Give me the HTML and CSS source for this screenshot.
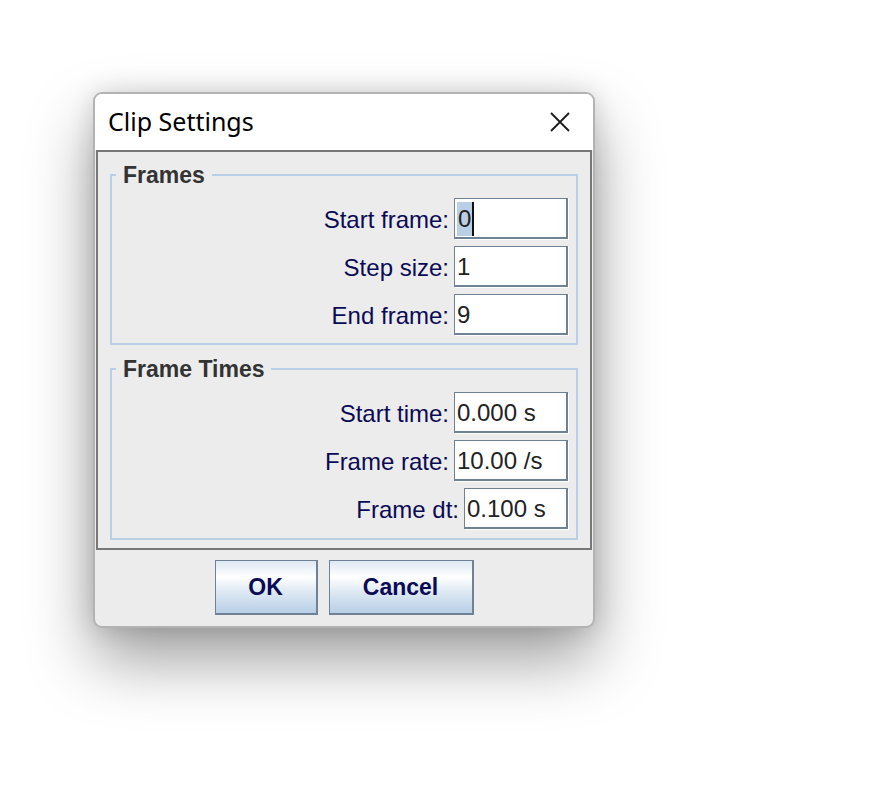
FILE: index.html
```html
<!DOCTYPE html>
<html>
<head>
<meta charset="utf-8">
<link rel="stylesheet" href="styles.css">
</head>
<body>
<div class="page">
  <div class="window">
    <div class="titlebar">
      <span class="title">Clip Settings</span>
      <svg class="close" width="20" height="20" viewBox="0 0 20 20"><path d="M1 1 L19 19 M19 1 L1 19" stroke="#1a1a1a" stroke-width="1.8" fill="none"/></svg>
    </div>
    <div class="body">
      <div class="frame">
        <fieldset class="group">
          <legend>Frames</legend>
          <div class="row"><span class="label">Start frame:</span><div class="field"><span class="sel">0</span><span class="caret"></span></div></div>
          <div class="row"><span class="label">Step size:</span><div class="field">1</div></div>
          <div class="row"><span class="label">End frame:</span><div class="field">9</div></div>
        </fieldset>
        <fieldset class="group second">
          <legend>Frame Times</legend>
          <div class="row"><span class="label">Start time:</span><div class="field">0.000 s</div></div>
          <div class="row"><span class="label">Frame rate:</span><div class="field">10.00 /s</div></div>
          <div class="row"><span class="label">Frame dt:</span><div class="field narrow">0.100 s</div></div>
        </fieldset>
      </div>
      <div class="buttons">
        <button class="btn ok">OK</button>
        <button class="btn cancel">Cancel</button>
      </div>
    </div>
  </div>
</div>
</body>
</html>
```
FILE: styles.css
```css
html, body {
  margin: 0;
  padding: 0;
  background: #ffffff;
}
.page {
  box-sizing: border-box;
  height: 798px;
  overflow: hidden;
  padding: 92px 0 0 93px;
}
.window {
  box-sizing: border-box;
  width: 502px;
  height: 536px;
  border: 2px solid #b3b3b3;
  border-radius: 9px;
  background: #ececec;
  overflow: hidden;
  box-shadow: 0 32px 64px rgba(0,0,0,0.38), 0 0 24px rgba(0,0,0,0.14);
}
.titlebar {
  height: 56px;
  box-sizing: border-box;
  background: #ffffff;
  display: flex;
  align-items: center;
  justify-content: space-between;
  padding: 0 23px 2px 13px;
}
.title {
  font-family: "Noto Sans", "Open Sans", sans-serif;
  font-size: 25px;
  color: #000;
  line-height: 34px;
}
.close {
  display: block;
  margin-top: 1px;
}
.body {
  padding: 0 1px;
}
.frame {
  border: 2px solid #777777;
  padding: 10px 12px 8px 12px;
}
.group {
  margin: 0;
  padding: 10px 8px 7px 0;
  border: 2px solid #b8cfe5;
  min-width: 0;
}
.group.second {
  margin-top: 11px;
  padding-bottom: 8px;
}
legend {
  margin-left: 4px;
  padding: 0 7px;
  font-family: "Liberation Sans", Arial, sans-serif;
  font-weight: bold;
  font-size: 23px;
  line-height: 26px;
  color: #333333;
}
.row {
  display: flex;
  justify-content: flex-end;
  align-items: center;
  gap: 5px;
  height: 42px;
}
.row + .row {
  margin-top: 6px;
}
.label {
  font-family: "Liberation Sans", Arial, sans-serif;
  font-size: 24px;
  color: #0a0a55;
  line-height: 28px;
  margin-top: 1px;
}
.field {
  box-sizing: border-box;
  width: 114px;
  height: 41px;
  align-self: flex-start;
  background: #ffffff;
  border-style: solid;
  border-color: #6f8194;
  border-width: 1px 2px 2px 1px;
  box-shadow: 1px 1px 0 #ffffff;
  padding: 1px 0 0 2px;
  display: flex;
  align-items: center;
  font-family: "Liberation Sans", Arial, sans-serif;
  font-size: 24px;
  color: #222222;
  line-height: 34px;
}
.field.narrow {
  width: 104px;
}
.sel {
  background: #b8cfe5;
  padding: 0 1px 0 1px;
  height: 34px;
  display: inline-block;
}
.caret {
  display: inline-block;
  width: 2px;
  height: 34px;
  background: #111111;
}
.buttons {
  display: flex;
  justify-content: center;
  gap: 11px;
  padding-top: 10px;
}
.btn {
  box-sizing: border-box;
  height: 55px;
  margin: 0;
  padding: 0;
  border: 1px solid #6f8194;
  border-right-width: 2px;
  border-bottom-width: 2px;
  background: linear-gradient(to bottom, #dde8f3 0%, #ffffff 30%, #dde8f3 60%, #b8cfe5 100%);
  font-family: "Liberation Sans", Arial, sans-serif;
  font-weight: bold;
  font-size: 23px;
  color: #0a0a55;
}
.btn.ok {
  width: 103px;
}
.btn.cancel {
  width: 145px;
}
```
